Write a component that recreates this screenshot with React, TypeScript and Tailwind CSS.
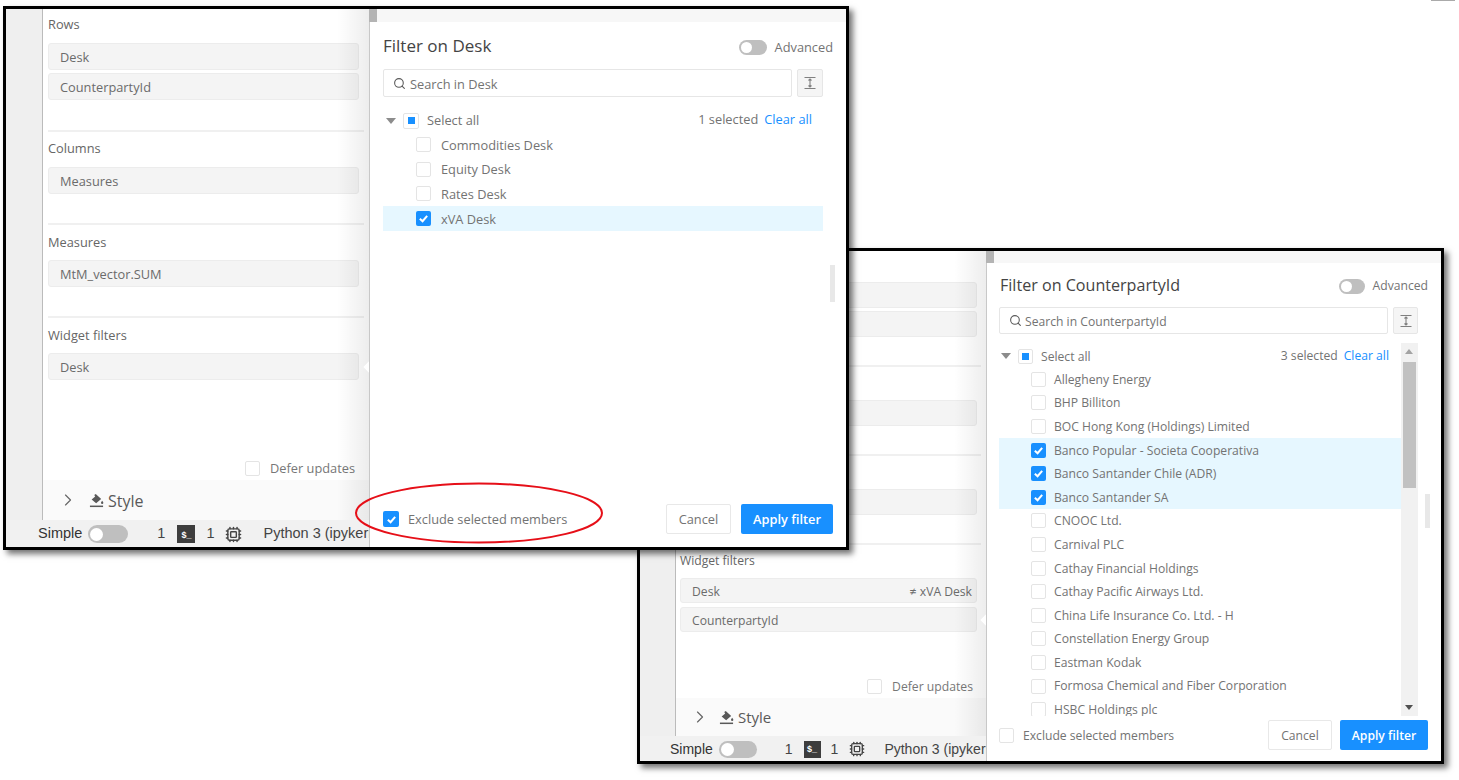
import React from "react";
import { ChevronRight, Cpu, Search } from "lucide-react";

type CheckState = "off" | "on" | "mixed";

const CheckBox = ({ state = "off", size = "w-4 h-4" }: { state?: CheckState; size?: string }) => {
  if (state === "on") {
    return (
      <span className={`${size} shrink-0 rounded-[2px] bg-[#1890ff] flex items-center justify-center`}>
        <svg viewBox="0 0 12 12" className="w-[11px] h-[11px]" fill="none" stroke="#fff" strokeWidth="2.2">
          <path d="M2 6.2 L5 9 L10 3.2" />
        </svg>
      </span>
    );
  }
  return (
    <span className={`${size} shrink-0 rounded-[2px] bg-white border border-[#e4e4e4] flex items-center justify-center`}>
      {state === "mixed" && <span className="w-[7px] h-[7px] bg-[#1890ff]" />}
    </span>
  );
};

const Toggle = ({ cls, knob }: { cls: string; knob: string }) => (
  <span className={`${cls} rounded-full bg-[#bfbfbf] flex items-center pl-[2px] shrink-0`}>
    <span className={`${knob} rounded-full bg-white`} />
  </span>
);

const Chip = ({ name, value, cls }: { name: string; value?: string; cls: string }) => (
  <div className={`${cls} rounded-[3px] bg-[#f4f4f4] border border-[#ececec] flex items-center justify-between pl-[11px] pr-[4px] text-[#6b6b6b] shrink-0`}>
    <span>{name}</span>
    {value && <span>{value}</span>}
  </div>
);

const PaintIcon = ({ cls }: { cls: string }) => (
  <svg viewBox="0 0 16 16" className={cls} fill="#595959">
    <path d="M7.2 1 L13 6.4 L7.6 11 L2.8 6.8 L6.6 3.6 L5.6 2.2 Z" />
    <path d="M14 8.2 c1 1.3 1.3 1.8 1.3 2.3 a1.2 1.2 0 0 1 -2.5 0 c0 -.5 .4 -1 1.2 -2.3 Z" />
    <rect x="1" y="13.4" width="14" height="1.6" />
  </svg>
);

const CaseIcon = () => (
  <svg viewBox="0 0 14 14" className="w-[14px] h-[14px]" fill="none" stroke="#808080" strokeWidth="1.1">
    <path d="M1.5 1.5 H12.5 M1.5 12.5 H12.5 M7 3.5 V10.5 M5.5 4.5 L7 3 L8.5 4.5 M5.5 9.5 L7 11 L8.5 9.5" />
  </svg>
);

const StatusBar = ({ small }: { small?: boolean }) => (
  <div className={`${small ? "h-[25px] pl-[30px]" : "h-[27px] pl-[32px]"} pt-[1px] bg-[#f1f1f1] flex items-center overflow-hidden whitespace-nowrap font-['Liberation_Sans',sans-serif] ${small ? "text-[14px]" : "text-[14.5px]"} text-[#444] shrink-0`}>
    <span className="text-[#333] shrink-0">Simple</span>
    <Toggle cls={small ? "w-[38px] h-[17px] ml-[6px]" : "w-[40px] h-[18px] ml-[6px]"} knob="w-[13px] h-[13px]" />
    <span className={small ? "ml-[28px] shrink-0" : "ml-[29px] shrink-0"}>1</span>
    <span className={`${small ? "w-[17px] h-[17px] ml-[11px]" : "w-[18px] h-[18px] ml-[12px]"} shrink-0 bg-[#3d3d3d] text-white text-[9px] font-bold flex items-end justify-center pb-[1px]`}>$_</span>
    <span className={small ? "ml-[10px] shrink-0" : "ml-[11px] shrink-0"}>1</span>
    <Cpu className={small ? "w-[16px] h-[16px] ml-[11px] text-[#444] shrink-0" : "w-[17px] h-[17px] ml-[11px] text-[#444] shrink-0"} strokeWidth={2} />
    <span className={small ? "ml-[19px] shrink-0" : "ml-[21px] shrink-0"}>Python 3 (ipykernel)</span>
  </div>
);

const DeferAndStyle = ({ small }: { small?: boolean }) => (
  <>
    <div className={`mt-auto flex items-center justify-end gap-[10px] ${small ? "pr-[13px] h-[24px] text-[12.2px]" : "pr-[14px] h-[24px] text-[12.8px]"} text-[#777]`}>
      <CheckBox size="w-[15px] h-[15px]" />
      <span className={small ? "pt-[3px]" : "pt-[2px]"}>Defer updates</span>
    </div>
    <div className={`${small ? "h-[38px] pl-[14px] text-[15px]" : "h-[40px] pl-[15px] text-[16px]"} bg-[#fafafa] flex items-center text-[#595959] shrink-0`}>
      <ChevronRight className="w-[20px] h-[20px] text-[#666] shrink-0" strokeWidth={1.4} />
      <PaintIcon cls={small ? "w-[15px] h-[15px] ml-[9px]" : "w-[15px] h-[15px] ml-[11px]"} />
      <span className="ml-[4px] pt-[1px] font-medium">Style</span>
    </div>
  </>
);

const Section = ({ title, cls, labelGap, chips, chipCls, stackGap, last }: {
  title: string;
  cls: string;
  labelGap: string;
  chips: { name: string; value?: string }[];
  chipCls: string;
  stackGap: string;
  last?: boolean;
}) => (
  <div className={`${cls} ${last ? "" : "border-b-2 border-[#f0f0f0]"} shrink-0`}>
    <div className={`h-[20px] leading-[20px] font-medium text-[#666] ${labelGap}`}>{title}</div>
    <div className={`flex flex-col ${stackGap}`}>
      {chips.map((c) => (
        <Chip key={c.name} name={c.name} value={c.value} cls={chipCls} />
      ))}
    </div>
  </div>
);

const Thumb = () => <div className="w-[8px] h-full bg-[#b4b4b4]" />;

const Caret = ({ cls }: { cls: string }) => (
  <div className={`absolute ${cls} w-[8px] h-[8px] rotate-45 bg-white`} />
);

const Fade = () => (
  <div className="absolute right-0 top-0 bottom-0 w-[32px] bg-gradient-to-r from-transparent to-[#00000012] pointer-events-none" />
);

const companies: [string, boolean][] = [
  ["Allegheny Energy", false],
  ["BHP Billiton", false],
  ["BOC Hong Kong (Holdings) Limited", false],
  ["Banco Popular - Societa Cooperativa", true],
  ["Banco Santander Chile (ADR)", true],
  ["Banco Santander SA", true],
  ["CNOOC Ltd.", false],
  ["Carnival PLC", false],
  ["Cathay Financial Holdings", false],
  ["Cathay Pacific Airways Ltd.", false],
  ["China Life Insurance Co. Ltd. - H", false],
  ["Constellation Energy Group", false],
  ["Eastman Kodak", false],
  ["Formosa Chemical and Fiber Corporation", false],
  ["HSBC Holdings plc", false],
];

const desks: [string, boolean][] = [
  ["Commodities Desk", false],
  ["Equity Desk", false],
  ["Rates Desk", false],
  ["xVA Desk", true],
];

const Triangle = () => (
  <span className="w-0 h-0 border-l-[5px] border-r-[5px] border-t-[6px] border-l-transparent border-r-transparent border-t-[#8c8c8c] shrink-0" />
);

const Member = ({ name, on, cls, textCls }: { name: string; on: boolean; cls: string; textCls: string }) => (
  <div className={`${cls} flex items-center ${on ? "bg-[#e6f7ff]" : ""}`}>
    <CheckBox state={on ? "on" : "off"} size="w-[15px] h-[15px]" />
    <span className={textCls}>{name}</span>
  </div>
);

const DeskDialog = () => (
  <div className="flex-1 min-w-0 flex flex-col">
    <div className="h-[13px] bg-[#f7f7f7] shrink-0"><Thumb /></div>
    <div className="relative flex-1 min-h-0 bg-white border-l border-[#c8c8c8] pl-[13px] pr-[13px] pb-[13px] flex flex-col text-[12.8px] text-[#737373]">
      <div className="h-[47px] flex items-center justify-between shrink-0">
        <span className="text-[17px] text-[#444] pt-[1px]">Filter on Desk</span>
        <div className="flex items-center gap-[8px] mt-[4px]">
          <Toggle cls="w-[28px] h-[15px]" knob="w-[11px] h-[11px]" />
          <span>Advanced</span>
        </div>
      </div>
      <div className="flex gap-[5px] mr-[10px] h-[28px] shrink-0">
        <div className="flex-1 border border-[#e6e6e6] rounded-[2px] flex items-center pl-[9px] gap-[4px]">
          <Search className="w-[13px] h-[13px] text-[#595959]" strokeWidth={2} />
          <span className="pt-[3px]">Search in Desk</span>
        </div>
        <div className="w-[26px] border border-[#e6e6e6] rounded-[2px] bg-[#f5f5f5] flex items-center justify-center"><CaseIcon /></div>
      </div>
      <div className="mt-[10px] mr-[10px] flex-1">
        <div className="h-[25px] flex items-center pt-[2px] pl-[3px] pr-[11px]">
          <Triangle />
          <span className="ml-[7px]"><CheckBox state="mixed" size="w-[16px] h-[16px]" /></span>
          <span className="ml-[8px]">Select all</span>
          <span className="ml-auto pb-[2px]">1 selected</span>
          <span className="ml-[6px] pb-[2px] text-[#1890ff]">Clear all</span>
        </div>
        {desks.map(([name, on]) => (
          <Member key={name} name={name} on={on} cls="h-[24.7px] pl-[33px] gap-[10px]" textCls="pt-[2px]" />
        ))}
      </div>
      <div className="absolute left-[460px] top-[243px] w-[5px] h-[37px] bg-[#e8e8e8]" />
      <div className="flex items-center h-[30px] shrink-0">
        <CheckBox state="on" size="w-[16px] h-[16px]" />
        <span className="ml-[9px] pt-[2px]">Exclude selected members</span>
        <span className="ml-auto w-[65px] h-[30px] pt-[2px] border border-[#e8e8e8] rounded-[2px] flex items-center justify-center">Cancel</span>
        <span className="ml-[10px] w-[92px] h-[30px] pt-[2px] bg-[#1890ff] rounded-[2px] text-white font-semibold flex items-center justify-center">Apply filter</span>
      </div>
    </div>
  </div>
);

const CounterpartyDialog = () => (
  <div className="flex-1 min-w-0 min-h-0 flex flex-col">
    <div className="h-[12px] bg-[#f7f7f7] shrink-0"><Thumb /></div>
    <div className="relative flex-1 min-h-0 bg-white border-l border-[#c8c8c8] pl-[12px] pr-[13px] pb-[11px] flex flex-col text-[12.15px] text-[#737373]">
      <div className="h-[44px] flex items-center justify-between shrink-0">
        <span className="text-[16.1px] text-[#444] pl-[1px]">Filter on CounterpartyId</span>
        <div className="flex items-center gap-[8px] mt-[3px]">
          <Toggle cls="w-[26px] h-[15px]" knob="w-[11px] h-[11px]" />
          <span>Advanced</span>
        </div>
      </div>
      <div className="flex gap-[5px] mr-[10px] h-[27px] shrink-0">
        <div className="flex-1 border border-[#e6e6e6] rounded-[2px] flex items-center pl-[9px] gap-[3px]">
          <Search className="w-[13px] h-[13px] text-[#595959]" strokeWidth={2} />
          <span className="pt-[3px]">Search in CounterpartyId</span>
        </div>
        <div className="w-[25px] border border-[#e6e6e6] rounded-[2px] bg-[#f5f5f5] flex items-center justify-center"><CaseIcon /></div>
      </div>
      <div className="relative mt-[9px] mr-[10px] flex-1 min-h-0 overflow-hidden pt-[2px]">
        <div className="h-[22.6px] flex items-center pl-[2px] pr-[29px]">
          <Triangle />
          <span className="ml-[7px]"><CheckBox state="mixed" size="w-[15px] h-[15px]" /></span>
          <span className="ml-[8px] pt-[2px]">Select all</span>
          <span className="ml-auto">3 selected</span>
          <span className="ml-[6px] text-[#1890ff]">Clear all</span>
        </div>
        <div className="mr-[17px]">
          {companies.map(([name, on]) => (
            <Member key={name} name={name} on={on} cls="h-[23.6px] pl-[32px] gap-[8px]" textCls="pt-[1px]" />
          ))}
        </div>
        <div className="absolute right-0 top-0 bottom-0 w-[17px] bg-[#f1f1f1]">
          <span className="absolute left-[4px] top-[6px] w-0 h-0 border-l-[4px] border-r-[4px] border-b-[5px] border-l-transparent border-r-transparent border-b-[#a3a3a3]" />
          <div className="absolute left-[2px] top-[19px] w-[13px] h-[126px] bg-[#c1c1c1]" />
          <span className="absolute left-[4px] bottom-[6px] w-0 h-0 border-l-[4px] border-r-[4px] border-t-[5px] border-l-transparent border-r-transparent border-t-[#505050]" />
        </div>
      </div>
      <div className="absolute left-[438px] top-[231px] w-[5px] h-[34px] bg-[#e8e8e8]" />
      <div className="flex items-center h-[30px] mt-[4px] shrink-0">
        <CheckBox size="w-[15px] h-[15px]" />
        <span className="ml-[9px] pt-[3px]">Exclude selected members</span>
        <span className="ml-auto w-[64px] h-[30px] pt-[3px] border border-[#e8e8e8] rounded-[2px] flex items-center justify-center">Cancel</span>
        <span className="ml-[8px] w-[88px] h-[30px] pt-[3px] bg-[#1890ff] rounded-[2px] text-white font-semibold flex items-center justify-center">Apply filter</span>
      </div>
    </div>
  </div>
);

const windowShell = "absolute border-[3px] border-black bg-white flex shadow-[4px_4px_6px_rgba(0,0,0,0.55)] font-['Open_Sans',sans-serif] overflow-hidden";

export default function App() {
  return (
    <div className="relative w-[1459px] h-[780px] bg-white overflow-hidden">
      <div className="absolute left-[1431px] top-0 w-[24px] h-[1px] bg-[#aaaaaa]" />

      {/* second window, sits behind the first one */}
      <div className={`${windowShell} left-[637px] top-[248px] w-[807px] h-[516px]`}>
        <div className="w-[346px] shrink-0 flex flex-col">
          <div className="flex-1 min-h-0 flex">
            <div className="w-[35px] bg-[#efefef] shrink-0" />
            <div className="relative flex-1 border-l border-[#bbbbbb] flex flex-col text-[12.15px]">
              <div className="pl-[4px] pr-[5px]">
                <Section title="Rows" cls="pt-[2px] h-[116px]" labelGap="mb-[9px]" stackGap="gap-[3px]" chipCls="h-[26px] mr-[4px] pt-[3px]" chips={[{ name: "Desk" }, { name: "CounterpartyId" }]} />
                <Section title="Columns" cls="pt-[5px] h-[89px]" labelGap="mb-[8px]" stackGap="gap-[3px]" chipCls="h-[26px] mr-[4px] pt-[3px]" chips={[{ name: "Measures" }]} />
                <Section title="Measures" cls="pt-[5px] h-[89px]" labelGap="mb-[8px]" stackGap="gap-[3px]" chipCls="h-[26px] mr-[4px] pt-[3px]" chips={[{ name: "MtM_vector.SUM" }]} />
                <Section title="Widget filters" cls="pt-[6px]" labelGap="mb-[7px]" stackGap="gap-[4px]" chipCls="h-[25px] mr-[4px] pt-[3px]" last chips={[{ name: "Desk", value: "≠ xVA Desk" }, { name: "CounterpartyId" }]} />
              </div>
              <DeferAndStyle small />
              <Fade />
              <Caret cls="right-[-4px] top-[365px]" />
            </div>
          </div>
          <StatusBar small />
        </div>
        <CounterpartyDialog />
      </div>

      {/* first window */}
      <div className={`${windowShell} left-[3px] top-[6px] w-[846px] h-[544px]`}>
        <div className="w-[363px] shrink-0 flex flex-col">
          <div className="flex-1 min-h-0 flex">
            <div className="w-[36px] bg-[#efefef] shrink-0" />
            <div className="relative flex-1 border-l border-[#bbbbbb] flex flex-col text-[12.8px]">
              <div className="pl-[5px] pr-[5px]">
                <Section title="Rows" cls="pt-[5px] h-[123px]" labelGap="mb-[9px]" stackGap="gap-[3px]" chipCls="h-[27px] mr-[5px] pt-[2px]" chips={[{ name: "Desk" }, { name: "CounterpartyId" }]} />
                <Section title="Columns" cls="pt-[6px] h-[93px]" labelGap="mb-[9px]" stackGap="gap-[3px]" chipCls="h-[27px] mr-[5px] pt-[2px]" chips={[{ name: "Measures" }]} />
                <Section title="Measures" cls="pt-[7px] h-[93px]" labelGap="mb-[8px]" stackGap="gap-[3px]" chipCls="h-[27px] mr-[5px] pt-[2px]" chips={[{ name: "MtM_vector.SUM" }]} />
                <Section title="Widget filters" cls="pt-[7px]" labelGap="mb-[8px]" stackGap="gap-[3px]" chipCls="h-[27px] mr-[5px] pt-[2px]" last chips={[{ name: "Desk" }]} />
              </div>
              <DeferAndStyle />
              <Fade />
              <Caret cls="right-[-4px] top-[354px]" />
            </div>
          </div>
          <StatusBar />
        </div>
        <DeskDialog />
      </div>

      {/* red annotation around the exclude checkbox */}
      <svg className="absolute left-[354px] top-[481px] w-[252px] h-[64px]" viewBox="0 0 252 64" fill="none">
        <ellipse cx="125" cy="32" rx="123" ry="29.5" stroke="#e60f18" strokeWidth="2" />
      </svg>
    </div>
  );
}
